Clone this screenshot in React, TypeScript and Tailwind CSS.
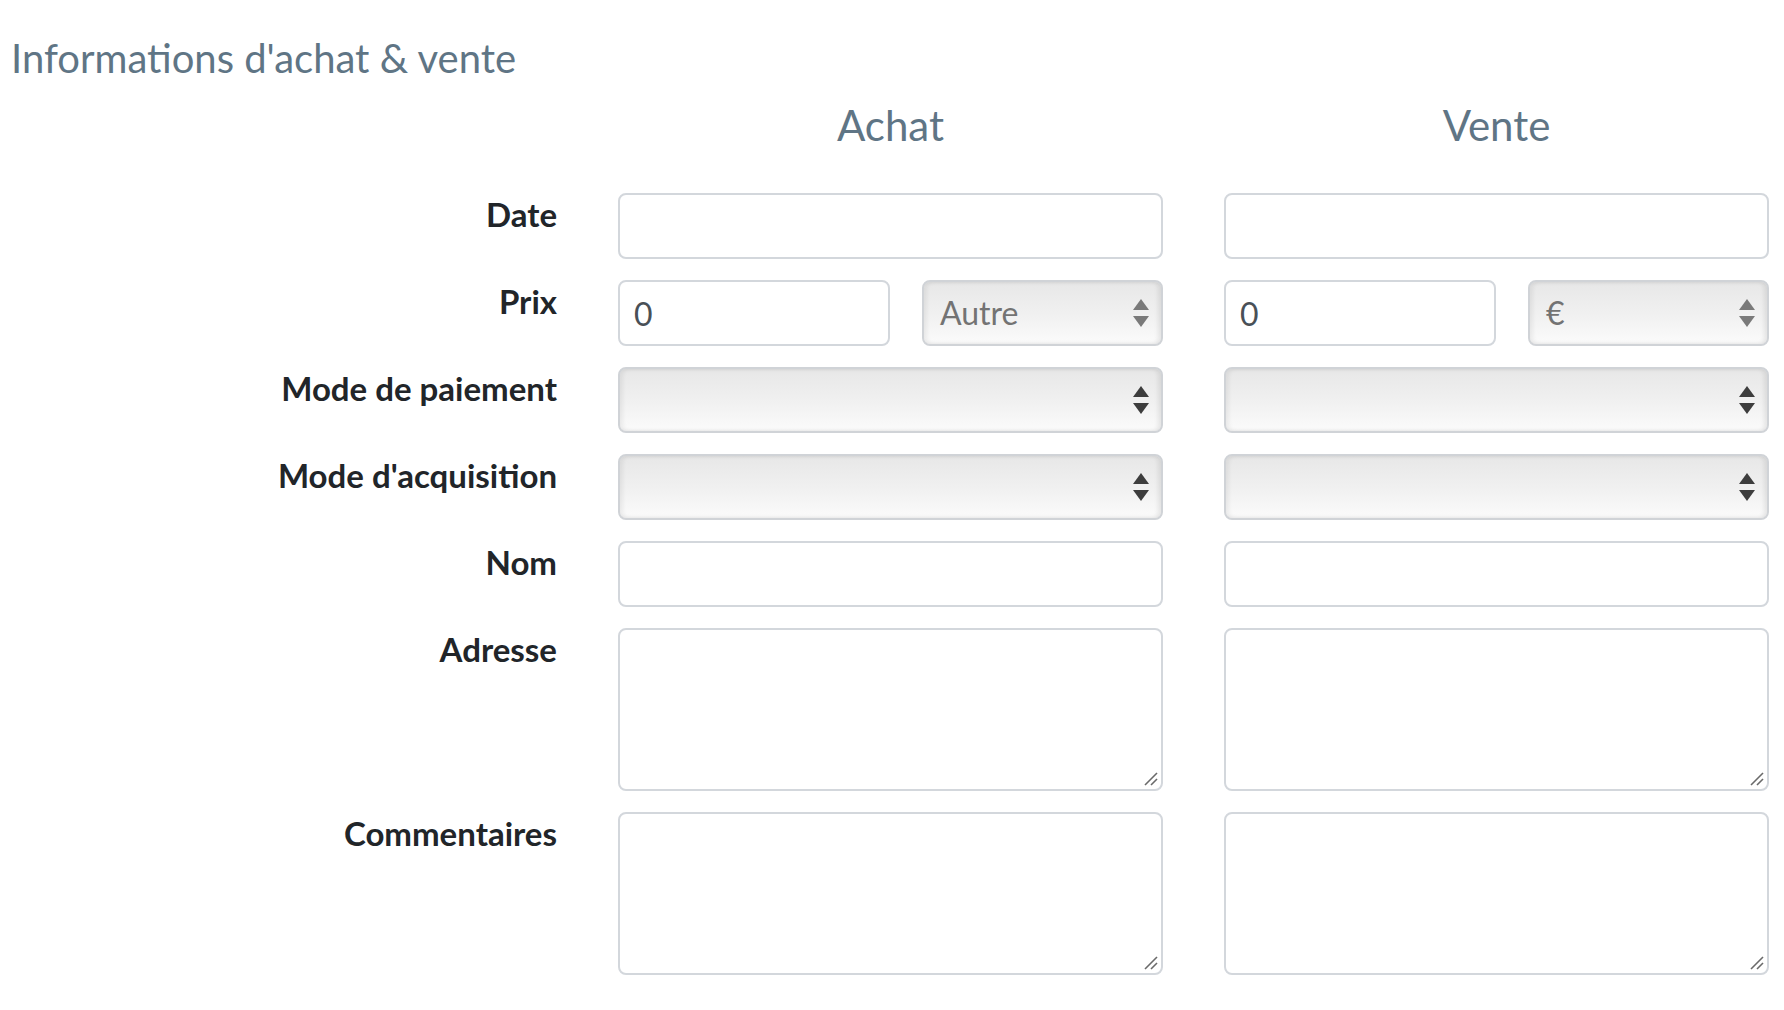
import React from 'react';

const labelCls =
  "text-right text-[33px] font-bold leading-[38px] pt-[2px] text-[#212529]";

const inputCls =
  "w-full h-[66px] border-2 border-[#d3d7dc] rounded-[8px] bg-white px-[14px] text-[32px] text-[#495057] outline-none font-['Lato',sans-serif]";

const Arrows = ({ light }: { light?: boolean }) => (
  <svg width="16" height="30" viewBox="0 0 16 30" className="shrink-0">
    <polygon points="0,12 8,1 16,12" fill={light ? '#7a7a7a' : '#3d3d3d'} />
    <polygon points="0,18 16,18 8,29" fill={light ? '#7a7a7a' : '#3d3d3d'} />
  </svg>
);

const Select = ({ value, muted }: { value?: string; muted?: boolean }) => (
  <div className="w-full h-[66px] border-2 border-[#d0d3d7] rounded-[8px] bg-[linear-gradient(to_bottom,#e7e7e7,#f1f1f1_55%,#fbfbfb)] shadow-[inset_3px_0_4px_rgba(0,0,0,0.06),inset_-3px_0_4px_rgba(0,0,0,0.08)] flex items-center justify-between pl-[16px] pr-[12px]">
    <span className="text-[32px] text-[#737373]">{value}</span>
    <Arrows light={muted} />
  </div>
);

const TextArea = () => (
  <div className="relative w-full h-[163px] border-2 border-[#d3d7dc] rounded-[8px] bg-white">
    <svg width="14" height="14" viewBox="0 0 14 14" className="absolute right-[3px] bottom-[3px]">
      <line x1="13" y1="1" x2="1" y2="13" stroke="#6a6a6a" strokeWidth="1.6" />
      <line x1="13" y1="7" x2="7" y2="13" stroke="#6a6a6a" strokeWidth="1.6" />
    </svg>
  </div>
);

const Field = ({ value }: { value?: string }) => (
  <input className={inputCls} readOnly defaultValue={value} />
);

export default function App() {
  return (
    <div className="w-[1784px] h-[1010px] bg-white font-['Lato',sans-serif]">
      {/* Section title */}
      <h2 className="pl-[11px] pt-[33px] text-[40px] leading-[50px] text-[#5f7585]">
        Informations d'achat &amp; vente
      </h2>

      <div className="grid grid-cols-[557px_545px_545px] gap-x-[61px] gap-y-[21px] mt-[17px]">
        {/* Column headers */}
        <div />
        <div className="text-center text-[42px] leading-[50px] text-[#5f7585] mb-[22px]">Achat</div>
        <div className="text-center text-[42px] leading-[50px] text-[#5f7585] mb-[22px]">Vente</div>

        <div className={labelCls}>Date</div>
        <Field />
        <Field />

        <div className={labelCls}>Prix</div>
        <div className="grid grid-cols-[1fr_241px] gap-x-[32px]">
          <Field value="0" />
          <Select value="Autre" muted />
        </div>
        <div className="grid grid-cols-[1fr_241px] gap-x-[32px]">
          <Field value="0" />
          <Select value="€" muted />
        </div>

        <div className={labelCls}>Mode de paiement</div>
        <Select />
        <Select />

        <div className={labelCls}>Mode d'acquisition</div>
        <Select />
        <Select />

        <div className={labelCls}>Nom</div>
        <Field />
        <Field />

        <div className={labelCls}>Adresse</div>
        <TextArea />
        <TextArea />

        <div className={labelCls}>Commentaires</div>
        <TextArea />
        <TextArea />
      </div>
    </div>
  );
}
